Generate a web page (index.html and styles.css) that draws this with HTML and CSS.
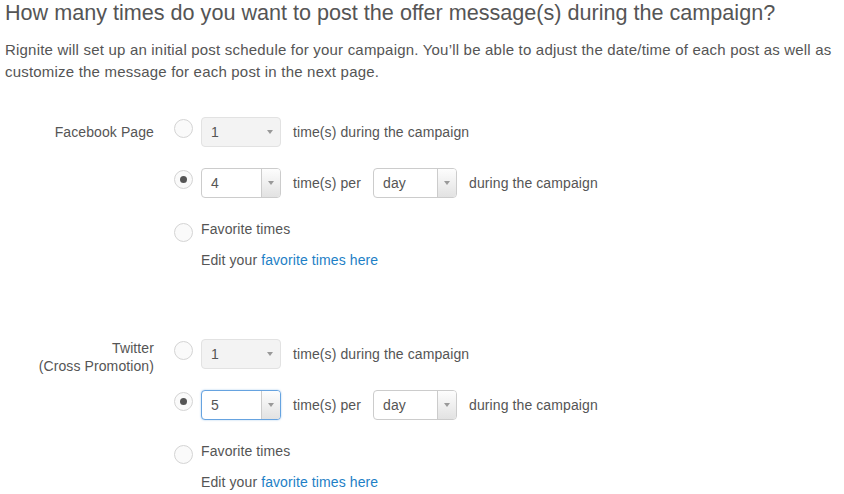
FILE: index.html
```html
<!DOCTYPE html>
<html>
<head>
<meta charset="utf-8">
<link rel="stylesheet" href="styles.css">
</head>
<body>
<h1 class="title">How many times do you want to post the offer message(s) during the campaign?</h1>
<p class="intro">Rignite will set up an initial post schedule for your campaign. You’ll be able to adjust the date/time of each post as well as customize the message for each post in the next page.</p>

<section class="channel channel--first">
  <div class="channel-label">Facebook Page</div>
  <div class="options">
    <div class="row row--select">
      <span class="radio"></span>
      <div class="choice">
        <div class="select select--disabled"><span class="value">1</span><span class="caret"><i></i></span></div>
        <span>time(s) during the campaign</span>
      </div>
    </div>
    <div class="row row--select row--second">
      <span class="radio radio--checked"></span>
      <div class="choice">
        <div class="select"><span class="value">4</span><span class="caret"><i></i></span></div>
        <span>time(s) per</span>
        <div class="select select--wide"><span class="value">day</span><span class="caret"><i></i></span></div>
        <span>during the campaign</span>
      </div>
    </div>
    <div class="row row--fav">
      <span class="radio"></span>
      <span>Favorite times</span>
    </div>
    <div class="edit">Edit your <a class="link" href="#">favorite times here</a></div>
  </div>
</section>

<section class="channel channel--next">
  <div class="channel-label channel-label--multi">Twitter<br>(Cross Promotion)</div>
  <div class="options">
    <div class="row row--select">
      <span class="radio"></span>
      <div class="choice">
        <div class="select select--disabled"><span class="value">1</span><span class="caret"><i></i></span></div>
        <span>time(s) during the campaign</span>
      </div>
    </div>
    <div class="row row--select row--second">
      <span class="radio radio--checked"></span>
      <div class="choice">
        <div class="select select--focus"><span class="value">5</span><span class="caret"><i></i></span></div>
        <span>time(s) per</span>
        <div class="select select--wide"><span class="value">day</span><span class="caret"><i></i></span></div>
        <span>during the campaign</span>
      </div>
    </div>
    <div class="row row--fav">
      <span class="radio"></span>
      <span>Favorite times</span>
    </div>
    <div class="edit">Edit your <a class="link" href="#">favorite times here</a></div>
  </div>
</section>
</body>
</html>
```

FILE: styles.css
```css
html, body {
  background: #fff;
}
body {
  margin: 0;
  padding: 0 5px;
  font-family: "Liberation Sans", Arial, sans-serif;
  font-size: 14px;
  letter-spacing: 0.1px;
  color: #555;
}
.title {
  margin: 0;
  font-size: 21.6px;
  font-weight: normal;
  line-height: 26px;
  letter-spacing: 0;
  color: #555;
}
.intro {
  margin: 13px 0 0;
  font-size: 15px;
  line-height: 22px;
  letter-spacing: 0.2px;
  color: #555;
}
.channel {
  display: grid;
  grid-template-columns: 149px 1fr;
  column-gap: 20px;
}
.channel--first {
  margin-top: 34px;
}
.channel--next {
  margin-top: 68px;
}
.channel-label {
  text-align: right;
  line-height: 18px;
  padding-top: 6px;
}
.channel-label--multi {
  padding-top: 0;
}
.options {
  display: flex;
  flex-direction: column;
}
.row {
  display: flex;
  align-items: flex-start;
  gap: 8px;
}
.row--select {
  height: 30px;
}
.row--second {
  margin-top: 21px;
}
.row--fav {
  margin-top: 20px;
  line-height: 22px;
}
.row--fav .radio {
  margin-top: 5px;
}
.choice {
  display: flex;
  align-items: center;
  gap: 12px;
  height: 30px;
}
.radio {
  box-sizing: border-box;
  width: 19px;
  height: 19px;
  flex: none;
  border: 1px solid #d4d4d4;
  border-radius: 50%;
  background: #fafafa;
  margin-top: 2px;
  position: relative;
}
.radio--checked::after {
  content: "";
  position: absolute;
  left: 50%;
  top: 50%;
  width: 7px;
  height: 7px;
  margin: -3.5px 0 0 -3.5px;
  border-radius: 50%;
  background: #555;
}
.select {
  box-sizing: border-box;
  display: flex;
  width: 80px;
  height: 30px;
  border: 1px solid #ccc;
  border-radius: 4px;
  background: #fff;
  overflow: hidden;
  color: #555;
}
.select--wide {
  width: 84px;
}
.select .value {
  flex: 1;
  padding-left: 9px;
  line-height: 28px;
}
.select .caret {
  width: 18px;
  flex: none;
  border-left: 1px solid #ccc;
  background: linear-gradient(#fdfdfd, #e2e2e2);
  display: flex;
  align-items: center;
  justify-content: center;
}
.select .caret i {
  display: block;
  width: 0;
  height: 0;
  border-left: 3px solid transparent;
  border-right: 3px solid transparent;
  border-top: 4px solid #999;
}
.select--disabled {
  background: #f3f3f3;
  border-color: #e2e2e2;
}
.select--disabled .caret {
  border-left: none;
  background: transparent;
  width: 20px;
}
.select--focus {
  border-color: #66a3e0;
  box-shadow: 0 0 2px rgba(102, 163, 224, 0.6);
}
.edit {
  margin-top: 7px;
  padding-left: 27px;
  line-height: 22px;
}
.link {
  color: #1e7fc6;
  text-decoration: none;
}
```
